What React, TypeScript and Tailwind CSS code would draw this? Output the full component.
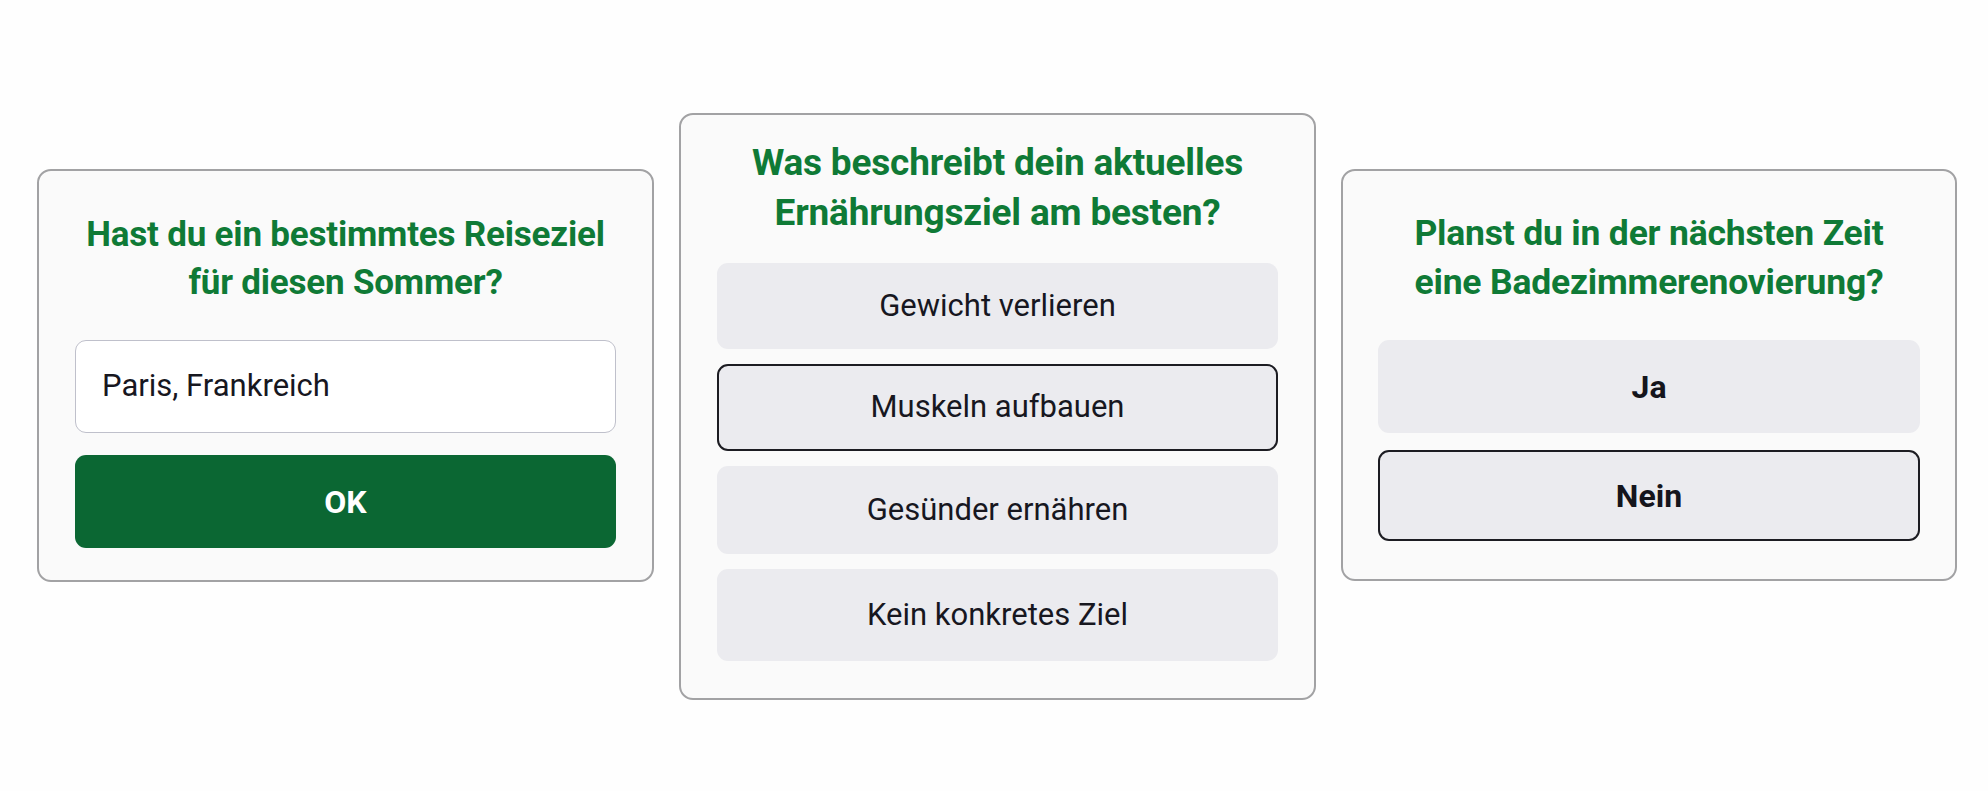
import React from "react";

const font = { fontFamily: "Roboto, 'Noto Sans', 'Liberation Sans', sans-serif" };

function TextQuestion() {
  return (
    <div className="mt-[56px] flex w-[617px] flex-col rounded-[14px] border-2 border-[#a2a2a4] bg-[#fafafa] px-[36px] pt-[40px] pb-[32px]">
      <h2 className="text-center text-[35px] font-bold leading-[48px] tracking-[-0.2px] text-[#0f7a36]">
        Hast du ein bestimmtes Reiseziel
        <br />
        für diesen Sommer?
      </h2>
      <div className="mt-[33px] flex h-[93px] items-center rounded-[11px] border-[1.5px] border-[#bfc0cb] bg-white px-[26px]">
        <span className="text-[31px] text-[#17171f]">Paris, Frankreich</span>
      </div>
      <button className="mt-[22px] flex h-[93px] items-center justify-center rounded-[11px] bg-[#0b6733] text-[32px] font-bold text-white">
        OK
      </button>
    </div>
  );
}

const goals = [
  { label: "Gewicht verlieren", h: "h-[86px]", selected: false },
  { label: "Muskeln aufbauen", h: "h-[87px]", selected: true },
  { label: "Gesünder ernähren", h: "h-[88px]", selected: false },
  { label: "Kein konkretes Ziel", h: "h-[92px]", selected: false },
];

function ChoiceQuestion() {
  return (
    <div className="flex w-[637px] flex-col rounded-[14px] border-2 border-[#a2a2a4] bg-[#fafafa] px-[36px] pt-[23px] pb-[37px]">
      <h2 className="text-center text-[37px] font-bold leading-[50px] tracking-[-0.2px] text-[#0f7a36]">
        Was beschreibt dein aktuelles
        <br />
        Ernährungsziel am besten?
      </h2>
      <div className="mt-[25px] flex flex-col gap-[15px]">
        {goals.map((g) => (
          <button
            key={g.label}
            className={`flex ${g.h} items-center justify-center rounded-[11px] bg-[#ebebef] text-[31px] text-[#17171f] ${
              g.selected ? "border-2 border-[#1c1c22]" : ""
            }`}
          >
            {g.label}
          </button>
        ))}
      </div>
    </div>
  );
}

function YesNoQuestion() {
  return (
    <div className="mt-[56px] flex w-[616px] flex-col rounded-[14px] border-2 border-[#a2a2a4] bg-[#fafafa] px-[35px] pt-[38px] pb-[38px]">
      <h2 className="text-center text-[35.5px] font-bold leading-[49px] tracking-[-0.2px] text-[#0f7a36]">
        Planst du in der nächsten Zeit
        <br />
        eine Badezimmerenovierung?
      </h2>
      <button className="mt-[33px] flex h-[93px] items-center justify-center rounded-[11px] bg-[#ebebef] text-[32px] font-bold text-[#15151c]">
        Ja
      </button>
      <button className="mt-[17px] flex h-[91px] items-center justify-center rounded-[11px] border-2 border-[#1c1c22] bg-[#ebebef] text-[32px] font-bold text-[#15151c]">
        Nein
      </button>
    </div>
  );
}

export default function App() {
  return (
    <div style={font} className="flex h-[791px] w-[1988px] items-start gap-[25px] bg-[#fefefe] pt-[113px] pl-[37px]">
      <TextQuestion />
      <ChoiceQuestion />
      <YesNoQuestion />
    </div>
  );
}
